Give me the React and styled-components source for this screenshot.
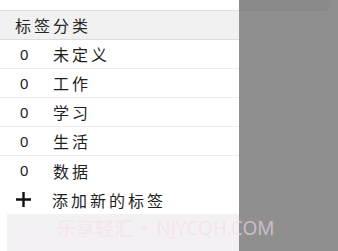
import React from "react";
import styled, { createGlobalStyle } from "styled-components";

const Global = createGlobalStyle`
  html, body { margin: 0; padding: 0; background: #ffffff; }
  body { width: 338px; height: 251px; overflow: hidden; font-family: "Noto Sans CJK SC", "Liberation Sans", sans-serif; }
`;

const Page = styled.div`
  position: relative;
  display: flex;
  width: 338px;
  height: 251px;
  overflow: hidden;
`;

const Drawer = styled.div`
  width: 239px;
  display: flex;
  flex-direction: column;
  background: #ffffff;
`;

const TopStrip = styled.div`
  height: 10px;
  border-bottom: 1px solid #e2e2e2;
`;

const Header = styled.div`
  height: 28px;
  display: flex;
  align-items: center;
  padding-left: 15px;
  background: #f1f1f1;
  border-bottom: 1px solid #dcdcdc;
  font-size: 16px;
  letter-spacing: 3px;
  color: #262626;
`;

const Row = styled.div`
  height: ${(p) => (p.$last ? 29 : 28)}px;
  display: flex;
  align-items: center;
  border-bottom: ${(p) => (p.$last ? "none" : "1px solid #ececec")};
  color: #1e1e1e;
`;

const Count = styled.span`
  width: 53px;
  padding-left: 20px;
  box-sizing: border-box;
  font-family: "Liberation Sans", sans-serif;
  font-size: 15px;
`;

const Label = styled.span`
  font-size: 16px;
  letter-spacing: 3px;
`;

const AddRow = styled.div`
  height: 29px;
  display: flex;
  align-items: center;
  color: #1e1e1e;
`;

const PlusBox = styled.span`
  width: 52px;
  padding-left: 15px;
  box-sizing: border-box;
  display: flex;
  align-items: center;
`;

const Footer = styled.div`
  flex: 1;
  margin-left: 7px;
  background: #f3f1f3;
`;

const Overlay = styled.div`
  flex: 1;
  background: #8f8f8f;
`;

const OverlayBar = styled.div`
  height: 10px;
  margin-right: 7px;
  background: #8a8a8a;
  border-bottom: 1px solid #878787;
  border-bottom-right-radius: 8px;
`;

const Watermark = styled.div`
  position: absolute;
  left: 57px;
  top: 218px;
  display: flex;
  align-items: center;
  gap: 8px;
  font-family: "Noto Sans", "Noto Sans CJK SC", sans-serif;
  font-size: 19px;
  line-height: 20px;
  color: rgba(246, 218, 238, 0.62);
  white-space: nowrap;
  pointer-events: none;
`;

const Mark = styled.span`
  font-family: "Noto Sans CJK SC", sans-serif;
`;

const tags = ["未定义", "工作", "学习", "生活", "数据"];

export default function App() {
  return (
    <>
      <Global />
      <Page>
        <Drawer>
          <TopStrip />
          <Header>标签分类</Header>
          {tags.map((t, i) => (
            <Row key={t} $last={i === tags.length - 1}>
              <Count>0</Count>
              <Label>{t}</Label>
            </Row>
          ))}
          <AddRow>
            <PlusBox>
              <svg width="17" height="17" viewBox="0 0 17 17">
                <path d="M8.5 1v15M1 8.5h15" stroke="#111" strokeWidth="2.4" />
              </svg>
            </PlusBox>
            <Label>添加新的标签</Label>
          </AddRow>
          <Footer />
        </Drawer>
        <Overlay>
          <OverlayBar />
        </Overlay>
        <Watermark>
          <Mark>乐享轻汇</Mark>
          <span>•</span>
          <span>NJYCQH.COM</span>
        </Watermark>
      </Page>
    </>
  );
}
